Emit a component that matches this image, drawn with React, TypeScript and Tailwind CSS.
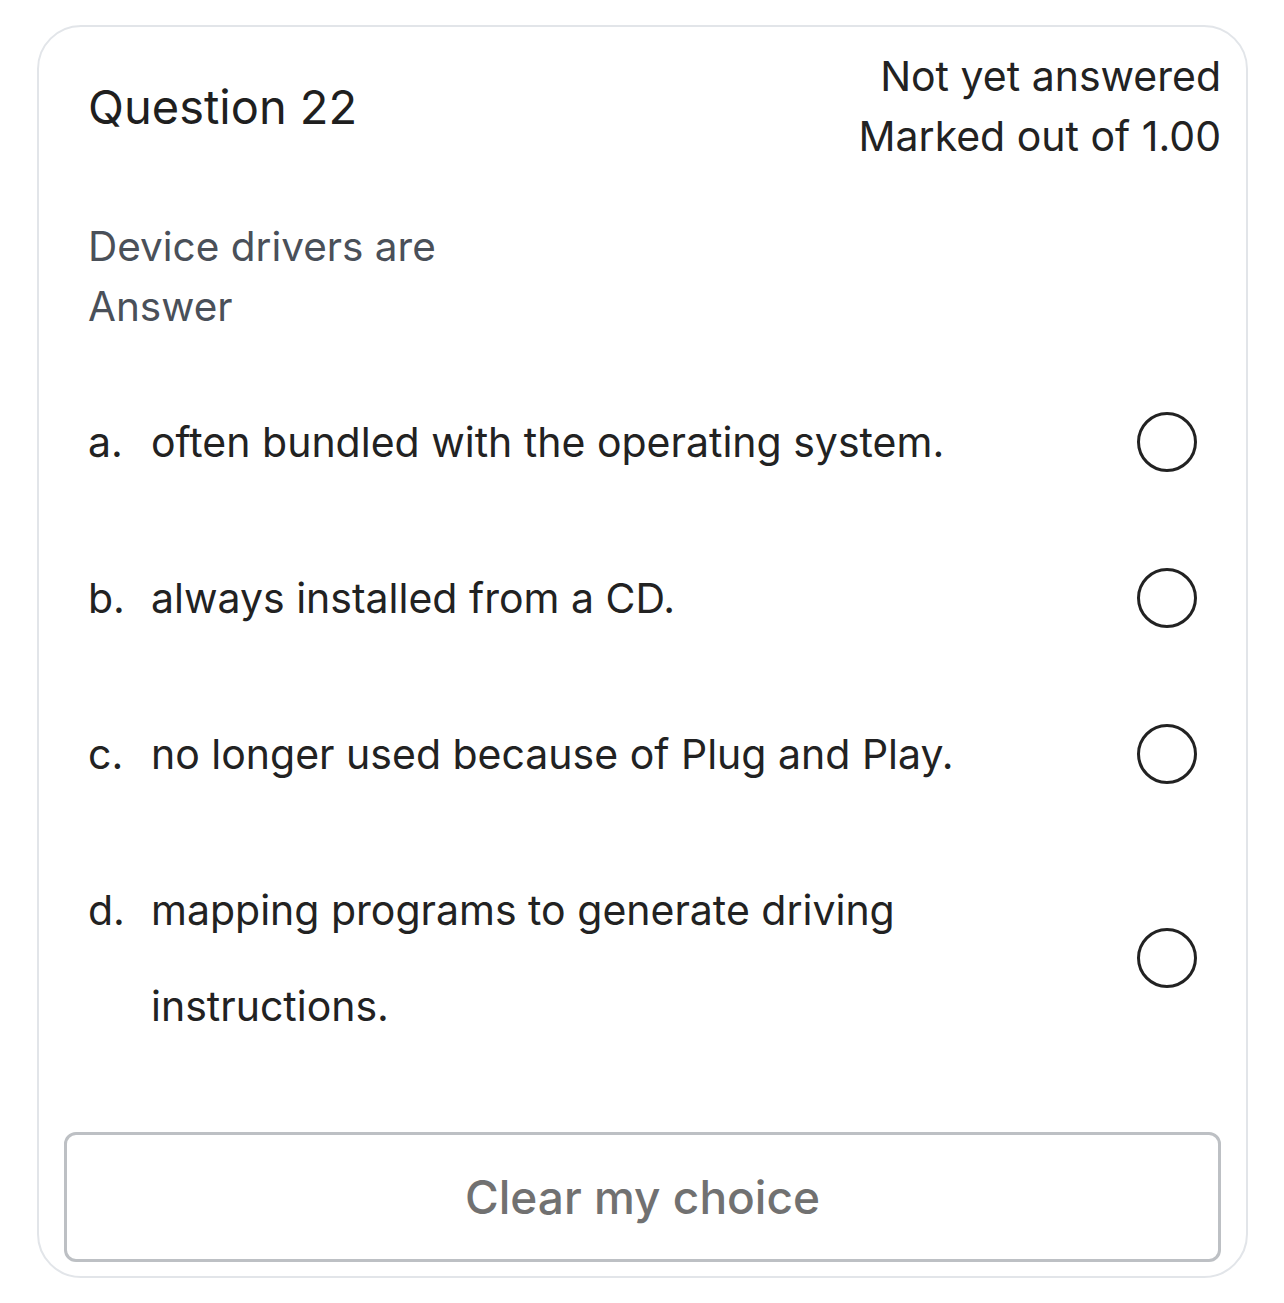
const options = [
  { letter: "a.", text: "often bundled with the operating system." },
  { letter: "b.", text: "always installed from a CD." },
  { letter: "c.", text: "no longer used because of Plug and Play." },
  { letter: "d.", text: "mapping programs to generate driving instructions." },
]

const Radio = () => (
  <span className="block h-[60px] w-[60px] shrink-0 rounded-full border-[3px] border-[#222222] bg-white" />
)

export default function App() {
  return (
    <div className="min-h-[1303px] bg-white pl-[37px] pt-[25px] font-['Inter','Liberation_Sans',sans-serif]">
      <div className="flex h-[1253px] w-[1211px] flex-col rounded-[44px] border-2 border-[#e2e5e9] px-[25px] pb-[14px]">
        <div className="flex items-center justify-between pl-[24px] pt-[19px]">
          <h2 className="text-[47px] leading-none text-[#1f1f1f]">Question 22</h2>
          <div className="text-right text-[41px] leading-[60px] text-[#222222]">
            <div>Not yet answered</div>
            <div>Marked out of 1.00</div>
          </div>
        </div>

        <div className="mt-[51px] pl-[24px] text-[40.5px] leading-[60px] text-[#4a5059]">
          <p>Device drivers are</p>
          <p>Answer</p>
        </div>

        <div className="mt-[57px] flex flex-col gap-[60px] pl-[24px] pr-[24px]">
          {options.map((o) => (
            <label key={o.letter} className="flex items-center justify-between">
              <div className="flex text-[41px] leading-[96px] text-[#222222]">
                <span className="w-[63px] shrink-0">{o.letter}</span>
                <span className="w-[900px]">{o.text}</span>
              </div>
              <Radio />
            </label>
          ))}
        </div>

        <button
          type="button"
          className="mt-auto h-[130px] w-full rounded-[12px] border-[3px] border-[#bdc0c4] bg-white text-[46px] font-medium text-[#717171]"
        >
          Clear my choice
        </button>
      </div>
    </div>
  )
}
